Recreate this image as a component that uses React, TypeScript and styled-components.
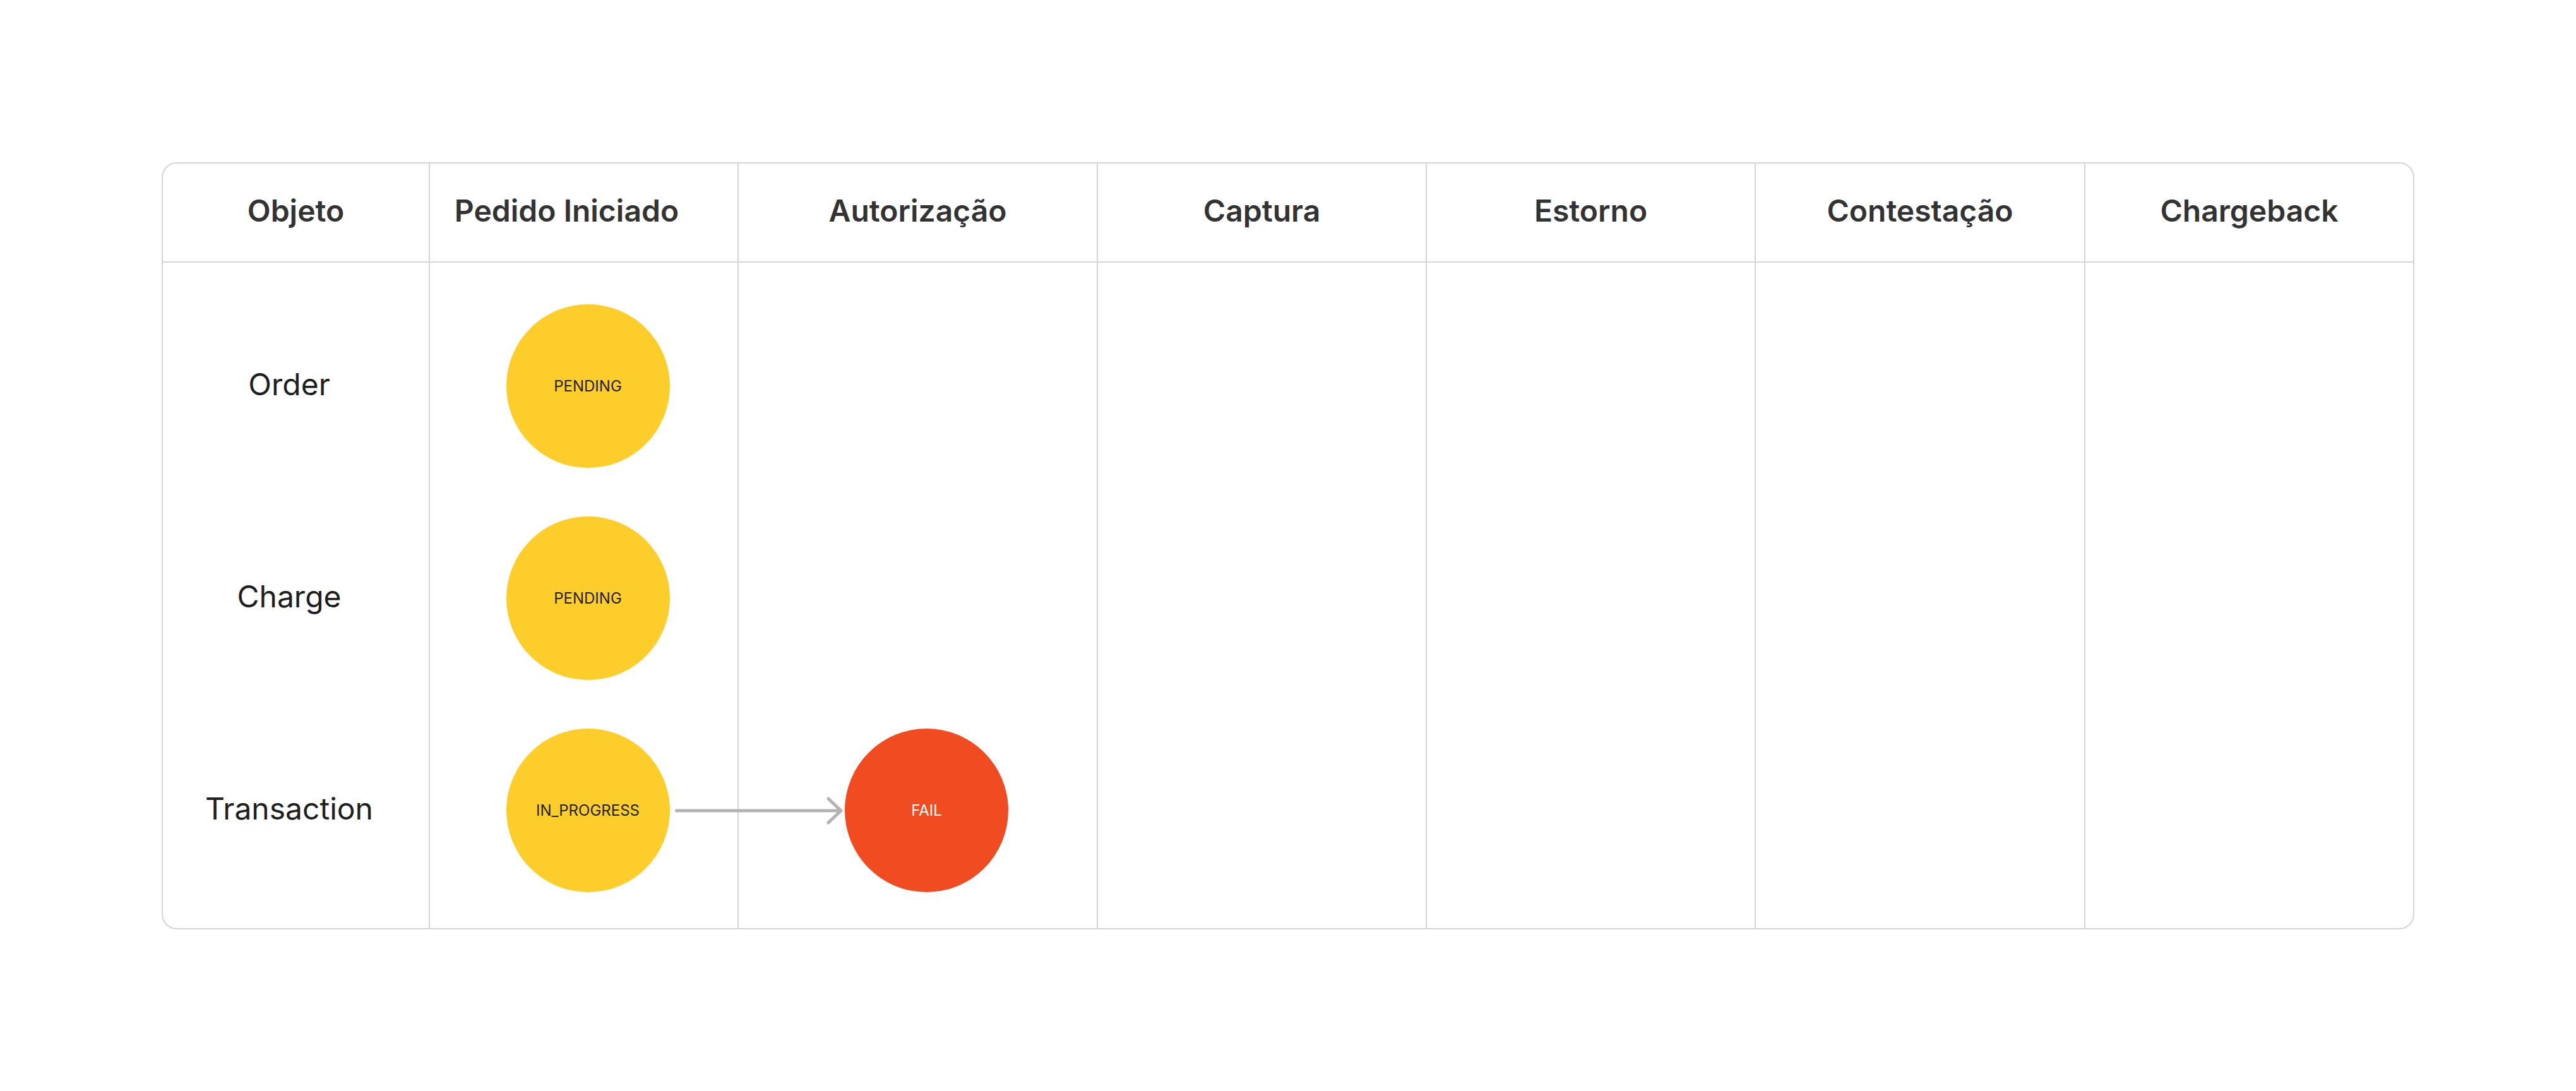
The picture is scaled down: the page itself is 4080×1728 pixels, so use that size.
import React from 'react';
import styled, { createGlobalStyle } from 'styled-components';

const GlobalStyle = createGlobalStyle`
  html, body {
    margin: 0;
    padding: 0;
    background: #ffffff;
  }
  body {
    font-family: Inter, "Noto Sans", "Liberation Sans", sans-serif;
  }
`;

const Page = styled.div`
  width: 4080px;
  height: 1728px;
  display: flex;
  align-items: center;
  justify-content: center;
  box-sizing: border-box;
`;

const Board = styled.div`
  width: 3568px;
  height: 1215px;
  box-sizing: border-box;
  border: 2px solid #d4d4d4;
  border-radius: 24px;
  overflow: hidden;
  display: grid;
  grid-template-columns: 423px 489px 569px 521px 521px 522px 1fr;
  grid-template-rows: 157px 1fr;
`;

const HeaderCell = styled.div<{ $last?: boolean; $shift?: number }>`
  box-sizing: border-box;
  display: flex;
  align-items: center;
  justify-content: center;
  border-bottom: 2px solid #d4d4d4;
  border-right: ${(p) => (p.$last ? 'none' : '2px solid #d4d4d4')};
  padding-bottom: 6px;
  padding-left: ${(p) => Math.max(0, (p.$shift ?? 0) * 2)}px;
  padding-right: ${(p) => Math.max(0, -(p.$shift ?? 0) * 2)}px;
  font-size: 48px;
  font-weight: 600;
  color: #333333;
  white-space: nowrap;
`;

const Column = styled.div<{ $last?: boolean; $shift?: number }>`
  box-sizing: border-box;
  display: flex;
  flex-direction: column;
  padding-top: 28px;
  padding-left: ${(p) => Math.max(0, (p.$shift ?? 0) * 2)}px;
  padding-right: ${(p) => Math.max(0, -(p.$shift ?? 0) * 2)}px;
  border-right: ${(p) => (p.$last ? 'none' : '2px solid #d4d4d4')};
`;

const Slot = styled.div`
  height: 336px;
  display: flex;
  align-items: center;
  justify-content: center;
  position: relative;
`;

const Label = styled.span`
  font-size: 48px;
  font-weight: 400;
  color: #1e1e1e;
  padding-bottom: 6px;
  white-space: nowrap;
`;

const Node = styled.div<{ $bg: string; $fg: string }>`
  position: relative;
  width: 259px;
  height: 259px;
  border-radius: 50%;
  background: ${(p) => p.$bg};
  color: ${(p) => p.$fg};
  display: flex;
  align-items: center;
  justify-content: center;
  font-size: 24px;
  font-weight: 400;
  white-space: nowrap;
`;

const ArrowSvg = styled.svg`
  position: absolute;
  left: calc(100% + 5px);
  top: calc(50% - 23px);
  overflow: visible;
`;

const YELLOW = '#FDCD2C';
const RED = '#F14B22';

type Status = { label: string; bg: string; fg: string } | null;

const headers: { title: string; shift?: number }[] = [
  { title: 'Objeto' },
  { title: 'Pedido Iniciado', shift: -27 },
  { title: 'Autorização' },
  { title: 'Captura' },
  { title: 'Estorno' },
  { title: 'Contestação' },
  { title: 'Chargeback' },
];

const objects = ['Order', 'Charge', 'Transaction'];

const pending: Status = { label: 'PENDING', bg: YELLOW, fg: '#222222' };
const inProgress: Status = { label: 'IN_PROGRESS', bg: YELLOW, fg: '#222222' };
const fail: Status = { label: 'FAIL', bg: RED, fg: '#ffffff' };

const stages: { shift?: number; nodes: Status[] }[] = [
  { shift: 6.5, nodes: [pending, pending, inProgress] },
  { shift: 14, nodes: [null, null, fail] },
  { nodes: [null, null, null] },
  { nodes: [null, null, null] },
  { nodes: [null, null, null] },
  { nodes: [null, null, null] },
];

const Arrow = () => (
  <ArrowSvg width="272" height="46" viewBox="0 0 272 46" fill="none">
    <line x1="5.5" y1="23" x2="265" y2="23" stroke="#B3B3B3" strokeWidth="5" strokeLinecap="round" />
    <polyline
      points="246,4 266,23 246,42"
      stroke="#B3B3B3"
      strokeWidth="5"
      strokeLinecap="round"
      strokeLinejoin="round"
    />
  </ArrowSvg>
);

export default function App() {
  return (
    <>
      <GlobalStyle />
      <Page>
        <Board>
          {headers.map((h, i) => (
            <HeaderCell key={h.title} $shift={h.shift} $last={i === headers.length - 1}>
              {h.title}
            </HeaderCell>
          ))}
          <Column $shift={-10.5}>
            {objects.map((o) => (
              <Slot key={o}>
                <Label>{o}</Label>
              </Slot>
            ))}
          </Column>
          {stages.map((s, si) => (
            <Column key={si} $shift={s.shift} $last={si === stages.length - 1}>
              {s.nodes.map((n, ni) => (
                <Slot key={ni}>
                  {n && (
                    <Node $bg={n.bg} $fg={n.fg}>
                      {n.label}
                      {si === 0 && ni === 2 && <Arrow />}
                    </Node>
                  )}
                </Slot>
              ))}
            </Column>
          ))}
        </Board>
      </Page>
    </>
  );
}
